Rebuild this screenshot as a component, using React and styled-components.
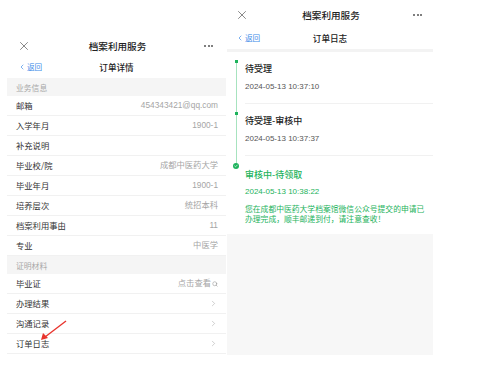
import React from "react";
import styled, { createGlobalStyle } from "styled-components";
import { X, ChevronLeft, ChevronRight, Search, Check } from "lucide-react";

const GlobalStyle = createGlobalStyle`
  body {
    margin: 0;
    background: #fff;
    font-family: "Noto Sans CJK SC", "Noto Sans", sans-serif;
    color: #333;
  }
`;

const detailRows = [
  { label: "邮箱", value: "454343421@qq.com" },
  { label: "入学年月", value: "1900-1" },
  { label: "补充说明", value: "" },
  { label: "毕业校/院", value: "成都中医药大学" },
  { label: "毕业年月", value: "1900-1" },
  { label: "培养层次", value: "统招本科" },
  { label: "档案利用事由", value: "11" },
  { label: "专业", value: "中医学" },
];

const logs = [
  { title: "待受理", time: "2024-05-13 10:37:10" },
  { title: "待受理-审核中", time: "2024-05-13 10:37:37" },
  {
    title: "审核中-待领取",
    time: "2024-05-13 10:38:22",
    note: "您在成都中医药大学档案馆微信公众号提交的申请已办理完成，顺丰邮递到付，请注意查收！",
    active: true,
  },
];

const TopBar = ({ edge }) => (
  <Header $edge={edge}>
    <X size={14} strokeWidth={1} color="#333" />
    <HeaderTitle>档案利用服务</HeaderTitle>
    <Dots>
      <i />
      <i />
      <i />
    </Dots>
  </Header>
);

const NavBar = ({ title, edge }) => (
  <Nav $edge={edge}>
    <Back>
      <ChevronLeft size={8} strokeWidth={2} />
      返回
    </Back>
    <NavTitle>{title}</NavTitle>
    <span />
  </Nav>
);

const App = () => {
  return (
    <>
      <GlobalStyle />
      <Page>
        <LeftPhone>
          <TopBar edge={10} />
          <NavBar title="订单详情" edge={13} />
          <Section>业务信息</Section>
          {detailRows.map((r) => (
            <Row key={r.label}>
              <Label>{r.label}</Label>
              <Value>{r.value}</Value>
            </Row>
          ))}
          <Section>证明材料</Section>
          <Row>
            <Label>毕业证</Label>
            <Value>
              点击查看
              <Search size={6} strokeWidth={2} />
            </Value>
          </Row>
          {["办理结果", "沟通记录", "订单日志"].map((t) => (
            <Row key={t}>
              <Label>{t}</Label>
              <ChevronRight size={9} strokeWidth={1.2} color="#999" />
            </Row>
          ))}
          <Pointer width="34" height="26" viewBox="0 0 34 26">
            <line x1="29" y1="3" x2="8" y2="19" stroke="#e8332c" strokeWidth="1.4" />
            <polygon points="4,22 6,15 11,20" fill="#e8332c" />
          </Pointer>
        </LeftPhone>

        <RightPhone>
          <TopBar edge={8} />
          <NavBar title="订单日志" edge={11} />
          <Band />
          {logs.map((l, i) => (
            <LogItem key={l.title}>
              <Rail>
                <Segment $hidden={i === 0} />
                {l.active ? (
                  <BigDot>
                    <Check size={4} strokeWidth={4} color="#fff" />
                  </BigDot>
                ) : (
                  <SmallDot />
                )}
                <Segment $grow $hidden={i === logs.length - 1} />
              </Rail>
              <LogBody $last={i === logs.length - 1} $active={l.active}>
                <LogTitle $active={l.active}>{l.title}</LogTitle>
                <LogTime $active={l.active}>{l.time}</LogTime>
                {l.note && <LogNote>{l.note}</LogNote>}
              </LogBody>
            </LogItem>
          ))}
          <Filler />
        </RightPhone>
      </Page>
    </>
  );
};

export default App;

const Page = styled.div`
  display: flex;
  align-items: flex-start;
  padding-left: 7px;
`;

const LeftPhone = styled.div`
  width: 219px;
  margin-top: 35px;
  position: relative;
  background: #fff;
`;

const RightPhone = styled.div`
  width: 206px;
  margin-left: 1px;
  background: #fff;
`;

const Header = styled.div`
  height: 21px;
  display: flex;
  align-items: center;
  justify-content: space-between;
  padding: 0 ${(p) => p.$edge + 2}px 0 ${(p) => p.$edge}px;
  ${RightPhone} & {
    height: 24px;
    padding-top: 3px;
  }
`;

const HeaderTitle = styled.div`
  font-size: 9.6px;
  font-weight: 500;
  color: #222;
  line-height: 12px;
`;

const Dots = styled.div`
  display: flex;
  gap: 1.5px;
  width: 10px;
  i {
    width: 2px;
    height: 2px;
    background: #555;
    border-radius: 1px;
  }
`;

const Nav = styled.div`
  height: 22px;
  display: grid;
  grid-template-columns: 1fr auto 1fr;
  align-items: center;
  padding: 0 ${(p) => p.$edge - 2}px;
`;

const Back = styled.div`
  display: flex;
  align-items: center;
  font-size: 7.6px;
  color: #3d8be8;
  line-height: 10px;
  svg {
    margin-right: 1px;
  }
`;

const NavTitle = styled.div`
  font-size: 8.6px;
  font-weight: 500;
  color: #222;
  line-height: 12px;
`;

const Section = styled.div`
  height: 18px;
  background: #f5f5f5;
  display: flex;
  align-items: center;
  padding-left: 9px;
  font-size: 7.8px;
  color: #a8a8a8;
`;

const Row = styled.div`
  height: 20px;
  box-sizing: border-box;
  display: flex;
  align-items: center;
  justify-content: space-between;
  padding: 0 8px 0 9px;
  border-bottom: 1px solid #f1f1f1;
  svg {
    flex-shrink: 0;
  }
`;

const Label = styled.div`
  font-size: 8.3px;
  color: #333;
  line-height: 11px;
`;

const Value = styled.div`
  display: flex;
  align-items: center;
  gap: 1px;
  font-size: 8.3px;
  color: #a5a5a5;
  line-height: 11px;
  font-family: "Liberation Sans", "Noto Sans CJK SC", sans-serif;
  svg {
    color: #888;
  }
`;

const Pointer = styled.svg`
  position: absolute;
  left: 30px;
  top: 283px;
`;

const Band = styled.div`
  height: 3px;
  background: #f3f3f3;
`;

const LogItem = styled.div`
  display: flex;
`;

const Rail = styled.div`
  width: 18px;
  flex-shrink: 0;
  display: flex;
  flex-direction: column;
  align-items: center;
`;

const Segment = styled.div`
  width: 1px;
  height: 8px;
  background: ${(p) => (p.$hidden ? "transparent" : "#a7e3bf")};
  ${(p) => p.$grow && "flex: 1;"}
`;

const SmallDot = styled.div`
  width: 3px;
  height: 3px;
  background: #1db35c;
`;

const BigDot = styled.div`
  width: 6px;
  height: 6px;
  border-radius: 50%;
  background: #1db35c;
  display: flex;
  align-items: center;
  justify-content: center;
  margin-top: -1px;
`;

const LogBody = styled.div`
  flex: 1;
  padding: ${(p) => (p.$active ? "13px" : "11px")} 0 10px;
  border-bottom: ${(p) => (p.$last ? "none" : "1px solid #f1f1f1")};
`;

const LogTitle = styled.div`
  font-size: 9px;
  font-weight: 500;
  line-height: 12px;
  color: ${(p) => (p.$active ? "#1db35c" : "#222")};
`;

const LogTime = styled.div`
  margin-top: ${(p) => (p.$active ? "5px" : "6px")};
  font-family: "Liberation Sans", sans-serif;
  font-size: 8px;
  line-height: 12px;
  color: ${(p) => (p.$active ? "#1db35c" : "#555")};
`;

const LogNote = styled.div`
  margin-top: 6px;
  width: 186px;
  font-size: 7.8px;
  line-height: 10px;
  color: #1db35c;
`;

const Filler = styled.div`
  height: 121px;
  background: #f7f7f7;
`;
